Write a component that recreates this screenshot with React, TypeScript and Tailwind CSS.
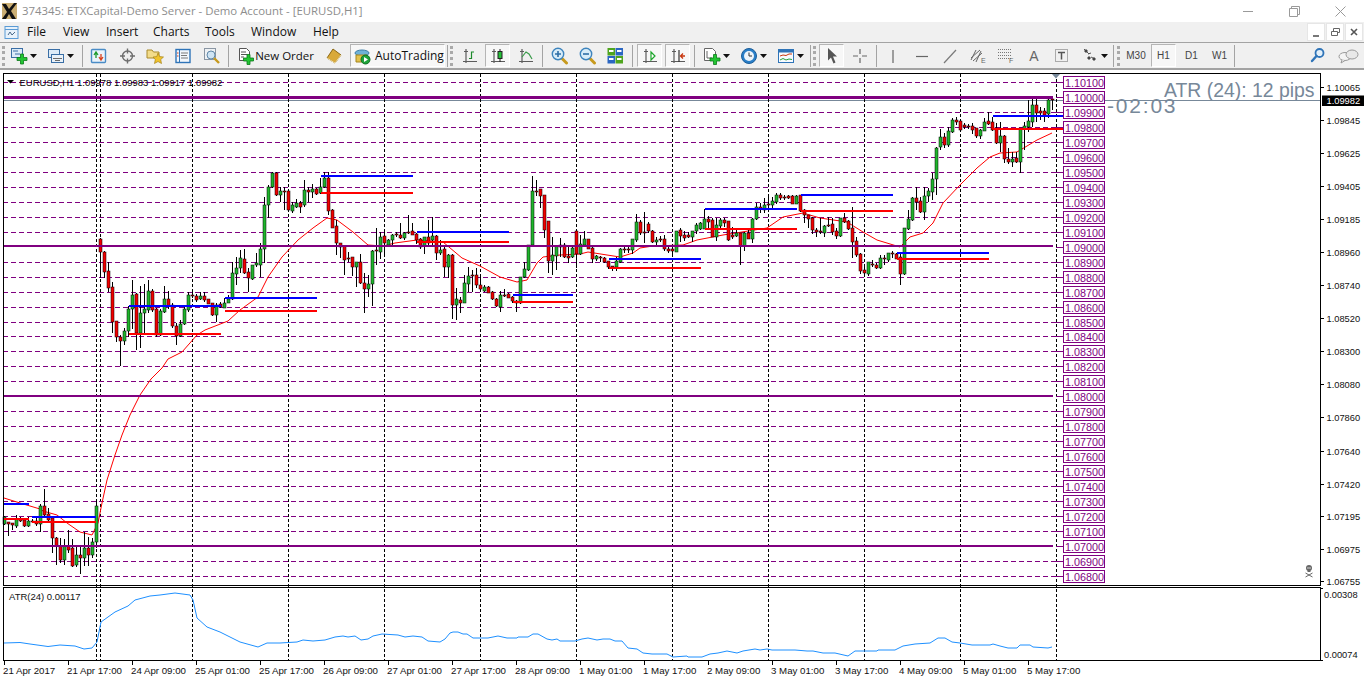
import React from "react";

type Bar = [number, number, number, number, number]; // body top, body bottom, high, low, 1 = green

// read off the chart in 3x crops, so values are (y - base) * 3
const fromCrop = (base: number, rows: Bar[]): Bar[] =>
  rows.map(([t, b, h, l, c]) => [
    Math.round(base + t / 3),
    Math.round(base + b / 3),
    Math.round(base + h / 3),
    Math.round(base + l / 3),
    c,
  ]);

const bars: Bar[] = [
  ...fromCrop(480, [
    [112, 132, 108, 135, 1], [127, 132, 127, 168, 0], [130, 135, 128, 150, 0], [118, 137, 105, 145, 1],
    [118, 122, 110, 125, 0], [120, 137, 118, 140, 0], [122, 137, 110, 140, 1], [122, 125, 118, 130, 0],
    [122, 133, 112, 137, 0], [78, 133, 72, 155, 1], [78, 105, 28, 115, 0], [103, 119, 85, 125, 0],
    [115, 175, 112, 218, 0], [175, 197, 170, 255, 0], [197, 240, 175, 250, 0], [197, 240, 178, 255, 1],
    [197, 209, 150, 218, 0], [205, 258, 178, 262, 0], [225, 255, 195, 260, 1], [225, 233, 195, 282, 0],
    [205, 235, 155, 258, 1], [205, 225, 172, 258, 0], [187, 225, 175, 235, 1], [78, 187, 60, 205, 1],
  ]),
  ...fromCrop(160, [
    [238, 275, 235, 355, 0], [275, 335, 272, 355, 0], [333, 383, 305, 395, 0], [381, 485, 365, 520, 0],
    [484, 530, 484, 545, 0], [530, 542, 525, 618, 0], [514, 542, 505, 555, 1], [448, 514, 438, 530, 1],
    [405, 448, 360, 508, 1], [402, 518, 398, 570, 0], [460, 518, 378, 565, 1], [447, 460, 372, 520, 1],
    [394, 450, 360, 460, 1], [394, 450, 388, 455, 0], [448, 525, 445, 530, 0], [453, 524, 448, 528, 1],
    [418, 455, 378, 460, 1], [418, 438, 392, 448, 0], [436, 497, 430, 505, 0], [499, 527, 490, 555, 0],
    [493, 527, 480, 530, 1], [447, 493, 440, 495, 1], [405, 450, 395, 455, 1], [405, 408, 392, 415, 0],
    [408, 420, 402, 425, 0], [408, 416, 396, 420, 1], [408, 420, 395, 425, 0], [418, 431, 416, 433, 0],
    [430, 465, 428, 468, 0], [434, 464, 430, 485, 1], [432, 442, 425, 445, 0], [428, 443, 415, 445, 1],
    [417, 428, 405, 430, 1], [340, 417, 305, 420, 1], [325, 341, 292, 375, 1], [295, 325, 270, 340, 1],
    [296, 338, 268, 342, 0], [336, 355, 325, 395, 0], [316, 356, 316, 360, 1], [310, 316, 280, 320, 1],
    [268, 314, 248, 352, 1], [136, 268, 112, 310, 1], [80, 136, 75, 175, 1], [39, 80, 35, 85, 1],
    [39, 104, 36, 108, 0], [94, 104, 80, 125, 1], [92, 94, 80, 150, 0], [94, 150, 92, 155, 0],
    [136, 152, 125, 160, 1], [130, 140, 118, 145, 1], [128, 140, 122, 158, 0], [91, 136, 60, 140, 1],
    [91, 95, 82, 125, 0], [88, 95, 72, 115, 1], [88, 102, 85, 104, 0], [82, 100, 55, 102, 1],
    [54, 82, 35, 85, 1], [55, 152, 35, 165, 0], [150, 203, 148, 205, 0], [199, 250, 180, 285, 0],
    [250, 260, 250, 295, 0], [259, 299, 258, 345, 0], [293, 296, 275, 305, 0], [292, 320, 292, 348, 0],
    [306, 320, 305, 382, 1], [306, 368, 282, 372, 0], [370, 386, 340, 460, 0], [372, 386, 345, 412, 1],
    [273, 371, 270, 438, 1], [270, 273, 205, 315, 0], [232, 276, 215, 298, 1], [229, 248, 215, 285, 0],
    [240, 254, 236, 258, 1], [224, 240, 222, 258, 1], [222, 226, 215, 232, 0], [226, 234, 190, 238, 0],
    [219, 234, 215, 240, 1], [217, 220, 165, 222, 0], [214, 224, 188, 226, 0], [222, 240, 220, 252, 0],
    [238, 262, 235, 266, 0], [232, 259, 230, 282, 1], [232, 248, 180, 255, 0], [229, 240, 172, 258, 1],
    [229, 278, 225, 300, 0], [270, 278, 240, 285, 1], [268, 322, 255, 352, 0], [284, 322, 282, 355, 1],
    [284, 434, 282, 478, 0], [418, 434, 385, 480, 1], [420, 428, 412, 460, 0], [370, 428, 345, 430, 1],
    [347, 372, 320, 395, 1], [346, 348, 330, 395, 0], [346, 376, 325, 385, 0], [376, 386, 350, 395, 0],
    [380, 394, 375, 396, 1], [380, 398, 378, 400, 0], [396, 418, 394, 420, 0], [418, 439, 415, 440, 0],
    [406, 440, 392, 455, 1], [404, 407, 388, 410, 0], [403, 413, 400, 415, 0], [412, 424, 408, 428, 0],
    [422, 430, 420, 455, 0], [352, 430, 352, 432, 1], [328, 352, 305, 355, 1], [254, 330, 254, 332, 1],
    [94, 254, 48, 255, 1], [92, 97, 60, 108, 0], [88, 107, 86, 145, 0], [106, 209, 106, 235, 0],
    [184, 304, 184, 338, 0], [286, 304, 232, 345, 1], [258, 288, 258, 330, 1], [256, 260, 235, 290, 0],
    [254, 290, 250, 295, 0], [287, 294, 262, 308, 0], [265, 292, 262, 295, 1], [214, 283, 214, 323, 0],
    [252, 282, 225, 285, 1], [238, 254, 212, 262, 1], [238, 266, 236, 268, 0], [265, 298, 262, 310, 0],
    [289, 297, 284, 302, 1], [291, 295, 288, 305, 0], [294, 306, 292, 308, 0], [304, 320, 302, 328, 0],
    [318, 322, 318, 332, 0], [304, 320, 290, 332, 1], [268, 306, 265, 308, 1], [266, 268, 260, 278, 0],
    [266, 270, 258, 280, 0], [238, 269, 236, 282, 1], [187, 240, 162, 245, 1], [185, 220, 180, 225, 0],
    [215, 218, 155, 250, 0], [193, 212, 185, 220, 0], [212, 245, 210, 250, 0], [240, 247, 230, 258, 1],
    [238, 241, 228, 245, 0], [238, 268, 226, 272, 0], [266, 272, 255, 280, 0], [268, 274, 258, 285, 0],
    [213, 275, 213, 276, 1], [210, 228, 205, 245, 0], [225, 233, 212, 243, 0], [226, 230, 215, 235, 0],
    [214, 230, 212, 245, 1], [195, 214, 190, 222, 1], [190, 207, 185, 210, 1], [177, 207, 147, 208, 1],
    [177, 185, 168, 205, 0], [181, 230, 175, 232, 0], [196, 230, 175, 242, 1], [180, 197, 175, 205, 1],
    [180, 188, 175, 200, 0], [183, 240, 182, 242, 0], [224, 232, 200, 238, 0], [220, 228, 208, 232, 1],
    [220, 257, 218, 314, 0], [218, 258, 215, 272, 1], [218, 236, 205, 238, 0], [177, 236, 175, 248, 1],
    [142, 177, 128, 180, 1], [140, 148, 128, 160, 0], [136, 150, 115, 158, 1], [132, 136, 112, 156, 0],
    [124, 134, 112, 146, 1], [105, 127, 100, 132, 1], [105, 115, 98, 120, 0], [111, 115, 106, 120, 0],
    [108, 113, 104, 118, 0], [108, 131, 106, 133, 0], [108, 131, 106, 132, 1], [106, 152, 105, 155, 0],
    [150, 165, 148, 190, 0], [166, 178, 164, 205, 0], [175, 209, 172, 222, 0], [209, 217, 205, 232, 0],
    [213, 216, 175, 222, 0], [198, 218, 196, 232, 1], [195, 198, 170, 200, 0], [193, 216, 175, 225, 0],
    [213, 228, 205, 238, 0], [175, 228, 173, 232, 1], [175, 187, 160, 190, 0], [184, 207, 180, 210, 0],
    [204, 245, 140, 295, 0], [243, 285, 232, 290, 0], [283, 332, 280, 342, 0], [330, 340, 320, 345, 0],
    [305, 343, 305, 348, 1], [312, 316, 300, 320, 0], [315, 324, 310, 328, 0], [295, 324, 285, 326, 1],
    [294, 298, 285, 315, 0], [280, 300, 278, 305, 1], [278, 281, 274, 295, 0], [283, 296, 278, 298, 0],
    [292, 342, 280, 375, 0], [205, 342, 205, 345, 1], [178, 206, 150, 210, 1], [115, 180, 110, 182, 1],
    [115, 125, 80, 150, 0], [122, 156, 110, 158, 0], [107, 155, 82, 180, 1], [92, 107, 85, 125, 1],
    [58, 95, 40, 120, 1],
  ]),
  ...fromCrop(90, [
    [175, 268, 172, 315, 1], [142, 172, 118, 180, 1], [142, 165, 130, 175, 0], [123, 166, 112, 170, 1],
    [90, 125, 85, 128, 1], [90, 95, 82, 105, 0], [94, 120, 92, 122, 0], [106, 110, 100, 118, 0],
    [108, 112, 103, 116, 0], [108, 120, 98, 132, 0], [115, 137, 113, 145, 0], [120, 137, 118, 147, 1],
    [96, 122, 85, 124, 1], [94, 102, 65, 105, 0], [97, 120, 80, 122, 0], [115, 158, 100, 162, 0],
    [138, 158, 96, 185, 1], [138, 208, 136, 218, 0], [206, 215, 175, 222, 0], [206, 215, 185, 232, 1],
    [203, 215, 185, 218, 0], [115, 215, 115, 250, 1], [108, 118, 95, 180, 1], [94, 110, 30, 125, 1],
    [45, 95, 28, 112, 1], [45, 68, 28, 95, 0], [64, 68, 50, 90, 0], [64, 74, 55, 95, 0],
    [30, 72, 28, 85, 1], [28, 30, 25, 60, 0],
  ]),
];

const maPoints =
  "4,498 20,503 40,509 43,511 57,515 67,523 80,532 92,535 98,523 102,503 107,480 115,455 122,435 130,415 140,395 151,379 162,368 168,359 182,352 197,335 205,330 228,321 240,310 258,297 268,277 282,257 298,240 313,228 327,218 337,220 353,232 368,245 383,246 395,243 417,240 443,242 462,258 480,266 500,277 517,282 527,280 537,263 543,257 560,255 580,254 588,252 607,255 620,257 633,253 640,248 653,246 683,245 697,240 723,235 767,228 783,217 803,213 820,218 847,222 863,232 877,240 900,247 910,237 923,233 933,223 943,203 960,185 977,168 990,157 1000,153 1017,152 1037,140 1052,133";

const atrPoints =
  "4,643 20,642.5 30,644 48,646.5 60,645 75,646 84,649 92,648 97,642 101,622 115,612 128,606 135,600 150,596 160,595 175,593 190,595 193,600 197,618 207,627 220,632 240,642 258,647 267,643 280,643 285,642.7 297,642 303,640 313,641 325,640 335,637 343,636 348,637 355,636 361,640 368,639 373,636 382,634 398,635 405,637 413,636 422,637 428,641 440,642 445,639 450,633 453,632 458,632 463,634 467,634 473,638 488,638 498,636 507,638 517,638 518,637 528,637 533,634 538,634 547,639 552,640 557,639 560,641 575,641 582,639 588,638 597,640 603,639 610,639 615,641 622,641 628,648 637,649 643,653 652,654 667,654 673,657 687,656 688,657 702,657 710,654 718,653 727,651 737,653 743,651 755,649 760,650 767,649 772,650 795,650 807,651 813,651 823,653 835,653 848,656 855,651 877,651 878,650 895,650 903,646 915,644 930,643 938,638 945,638 952,642 960,643 972,645 990,645 993,644 1000,646 1008,648 1017,648 1020,645 1030,645 1033,647 1048,648 1052,647";

// [x from, x to, y blue, y red]
const levels = [
  [3, 29, 504, 519],
  [32, 96, 517, 522],
  [129, 221, 306, 334],
  [225, 317, 298, 311],
  [321, 413, 176, 193],
  [417, 509, 232, 242],
  [513, 573, 295, 302],
  [609, 701, 259, 268],
  [705, 797, 209, 229],
  [801, 893, 195, 211],
  [897, 989, 253, 259],
  [993, 1063, 116, 129],
];

const roundLabels = [
  "1.10100", "1.10000", "1.09900", "1.09800", "1.09700", "1.09600", "1.09500", "1.09400", "1.09300",
  "1.09200", "1.09100", "1.09000", "1.08900", "1.08800", "1.08700", "1.08600", "1.08500", "1.08400",
  "1.08300", "1.08200", "1.08100", "1.08000", "1.07900", "1.07800", "1.07700", "1.07600", "1.07500",
  "1.07400", "1.07300", "1.07200", "1.07100", "1.07000", "1.06900", "1.06800",
];

const priceAxis: [string, number][] = [
  ["1.10065", 90.5], ["1.09845", 123.5], ["1.09625", 156.5], ["1.09405", 189.5], ["1.09185", 222.5],
  ["1.08960", 255.5], ["1.08740", 288.5], ["1.08520", 321.5], ["1.08300", 354.5], ["1.08080", 387.5],
  ["1.07860", 420.5], ["1.07640", 454.5], ["1.07420", 487.5], ["1.07195", 519.5], ["1.06975", 552.5],
  ["1.06755", 585],
];

const timeAxis = [
  "21 Apr 2017", "21 Apr 17:00", "24 Apr 09:00", "25 Apr 01:00", "25 Apr 17:00", "26 Apr 09:00",
  "27 Apr 01:00", "27 Apr 17:00", "28 Apr 09:00", "1 May 01:00", "1 May 17:00", "2 May 09:00",
  "3 May 01:00", "3 May 17:00", "4 May 09:00", "5 May 01:00", "5 May 17:00",
];

const vLines = [96.5, 100.5, 192.5, 288.5, 384.5, 480.5, 576.5, 672.5, 768.5, 864.5, 960.5, 1056.5];
const roundY = (k: number) => Math.round(82 + k * 14.97) + 0.5;

const Ic = ({ w = 17, children }: { w?: number; children: React.ReactNode }) => (
  <svg width={w} height={18} viewBox={`0 0 ${w} 18`} className="block shrink-0">
    {children}
  </svg>
);

const Plus = ({ x, y }: { x: number; y: number }) => (
  <path
    transform={`translate(${x} ${y})`}
    d="M3.5 0h3v3.5H10v3H6.500V10h-3V6.500H0v-3h3.500z"
    fill="#22c532"
    stroke="#0b7a1a"
    strokeWidth="0.8"
  />
);

const Caret = () => (
  <svg width={7} height={4} viewBox="0 0 7 4" className="block shrink-0">
    <path d="M0 0h7L3.500 4z" fill="#111" />
  </svg>
);

const Axes = () => (
  <path d="M4 2v14M1 14.500h14M2 4.500h4" stroke="#5c5c5c" strokeWidth="1.200" fill="none" />
);

const Grip = () => <div className="h-[20px] w-[3px] border-l-[3px] border-dotted border-[#a9a9a9]" />;
const Sep = () => <div className="h-[22px] w-px bg-[#a3a3a3]" />;

const Pressed = ({ className, children }: { className: string; children: React.ReactNode }) => (
  <div
    className={`flex h-[23px] items-center justify-center border border-t-[#b5b5b5] border-l-[#b5b5b5] border-r-white border-b-white bg-[#f7f7f7] ${className}`}
  >
    {children}
  </div>
);

const ZoomGlass = ({ minus }: { minus?: boolean }) => (
  <Ic w={18}>
    <path d="M10.500 11l5 5" stroke="#c79a1e" strokeWidth="3" strokeLinecap="round" />
    <circle cx="7" cy="7" r="5.700" fill="#d8ecf8" stroke="#3d84bd" strokeWidth="1.400" />
    <path d={minus ? "M4 7h6" : "M4 7h6M7 4v6"} stroke="#2f6fa6" strokeWidth="1.600" />
  </Ic>
);

const Toolbar = () => (
  <div className="flex h-[28px] items-center border-t border-b-2 border-t-[#a3a3a3] border-b-[#a3a3a3] bg-[#f0f0f0] font-['Open_Sans',sans-serif] text-[12px] text-[#111]">
    <div className="ml-[2px]"><Grip /></div>
    <div className="ml-[5px] flex w-[27px] items-center justify-between">
      <Ic w={18}>
        <rect x="1.500" y="1.500" width="11" height="9" fill="#dcebf8" stroke="#3a6ea5" />
        <path d="M3 4h5M5 7h5" stroke="#3a6ea5" />
        <Plus x={7} y={7} />
      </Ic>
      <Caret />
    </div>
    <div className="ml-[10px] flex w-[27px] items-center justify-between">
      <Ic w={18}>
        <rect x="1.500" y="2.500" width="11" height="8" fill="#dcebf8" stroke="#3a6ea5" />
        <rect x="4.500" y="7.500" width="12" height="8" fill="#e9f1f8" stroke="#3a6ea5" />
        <path d="M6 11.500h9M8 13.500h5" stroke="#6b6b6b" />
      </Ic>
      <Caret />
    </div>
    <div className="ml-[8px]"><Sep /></div>
    <div className="ml-[7px]">
      <Ic>
        <rect x="1.500" y="2.500" width="14" height="13" rx="1" fill="#eaf3fb" stroke="#4a8cc6" strokeWidth="1.400" />
        <path d="M6 11V6M4 8l2-3 2 3" stroke="#1d9a2c" strokeWidth="1.300" fill="none" />
        <path d="M11 7v5M9 10l2 3 2-3" stroke="#d8401c" strokeWidth="1.300" fill="none" />
      </Ic>
    </div>
    <div className="ml-[12px]">
      <Ic>
        <circle cx="8.500" cy="9" r="5" fill="none" stroke="#6e6e6e" strokeWidth="1.400" />
        <path d="M8.500 1.500v5M8.500 11.500v5M1 9h5M11 9h5" stroke="#6e6e6e" strokeWidth="1.400" />
      </Ic>
    </div>
    <div className="ml-[10px]">
      <Ic w={18}>
        <path d="M1 3h5l1.500 2H13v6H1z" fill="#f3dc8a" stroke="#a98a2c" />
        <path d="M12 6l1.700 3.600 3.800.4-2.800 2.600.8 3.900-3.500-2-3.500 2 .8-3.900L7 10l3.800-.4z" fill="#f0c32c" stroke="#a5821a" strokeWidth="0.700" />
      </Ic>
    </div>
    <div className="ml-[11px]">
      <Ic w={16}>
        <rect x="1" y="2.500" width="14" height="13" fill="#f2f7fc" stroke="#2f74b8" strokeWidth="1.400" />
        <path d="M4.500 3v12" stroke="#2f74b8" />
        <path d="M6 6h7M6 8.500h6M6 11h7" stroke="#7a7a7a" />
        <path d="M2 6h1.500M2 9h1.500" stroke="#d8401c" />
      </Ic>
    </div>
    <div className="ml-[12px]">
      <Ic>
        <rect x="1.500" y="1.500" width="11" height="11" fill="#eef1f4" stroke="#8a96a3" />
        <circle cx="8" cy="8" r="4" fill="#cfe4f4" stroke="#5f87a8" />
        <path d="M11 11l5 5" stroke="#c79a1e" strokeWidth="2.400" />
      </Ic>
    </div>
    <div className="ml-[8px]"><Sep /></div>
    <div className="ml-[9px] flex w-[76px] items-center justify-between">
      <Ic w={16}>
        <path d="M1.500 1.500h7l3 3v9h-10z" fill="#fff" stroke="#555" />
        <path d="M3 5h5M3 7.500h6M3 10h3" stroke="#555" />
        <Plus x={5.500} y={7.500} />
      </Ic>
      <span className="whitespace-nowrap text-[11.5px]">New Order</span>
    </div>
    <div className="ml-[12px]">
      <Ic w={16}>
        <path d="M7 2l8 6-6 8-8-5z" fill="#d9a93a" stroke="#8a6714" />
        <path d="M1 11l8 5 6-8" fill="none" stroke="#f4e2ae" />
      </Ic>
    </div>
    <Pressed className="ml-[8px] w-[95px] justify-start gap-[4px] pl-[3px]">
      <Ic w={17}>
        <ellipse cx="8" cy="6" rx="7" ry="3" fill="#6fb2d8" stroke="#3c7ea8" />
        <path d="M2 8h11v7H2z" fill="#e4c24e" stroke="#a4861f" />
        <circle cx="11.500" cy="12.500" r="4.500" fill="#1ea33a" stroke="#0e6f22" />
        <path d="M10 10l4 2.500-4 2.500z" fill="#fff" />
      </Ic>
      <span className="whitespace-nowrap">AutoTrading</span>
    </Pressed>
    <div className="ml-[2px]"><Sep /></div>
    <div className="ml-[2px]"><Grip /></div>
    <div className="ml-[9px]">
      <Ic w={16}>
        <Axes />
        <path d="M7 11.500h2.500V5H12" stroke="#1d8a2c" strokeWidth="1.200" fill="none" />
      </Ic>
    </div>
    <Pressed className="ml-[7px] w-[25px]">
      <Ic w={16}>
        <Axes />
        <path d="M10 2v13" stroke="#222" />
        <rect x="8" y="4.500" width="4" height="7" fill="#24c038" stroke="#222" />
      </Ic>
    </Pressed>
    <div className="ml-[8px]">
      <Ic w={16}>
        <Axes />
        <path d="M4 10l4-5 3 2 3 5" stroke="#3a9a4a" strokeWidth="1.200" fill="none" />
      </Ic>
    </div>
    <div className="ml-[8px]"><Sep /></div>
    <div className="ml-[8px]"><ZoomGlass /></div>
    <div className="ml-[10px]"><ZoomGlass minus /></div>
    <div className="ml-[10px]">
      <Ic w={16}>
        <rect x="0.500" y="1" width="7.500" height="7.500" fill="#4fa51e" />
        <rect x="8.500" y="1" width="7.500" height="7.500" fill="#2a66c2" />
        <rect x="0.500" y="9" width="7.500" height="7.500" fill="#2a66c2" />
        <rect x="8.500" y="9" width="7.500" height="7.500" fill="#4fa51e" />
        <path d="M2 4h4.500M10 4h4.500M2 12h4.500M10 12h4.500" stroke="#fff" strokeWidth="2" />
      </Ic>
    </div>
    <div className="ml-[9px]"><Sep /></div>
    <Pressed className="ml-[4px] w-[25px]">
      <Ic w={16}>
        <Axes />
        <path d="M9 5l4 4-4 4z" fill="#fff" stroke="#1da52c" strokeWidth="1.200" />
      </Ic>
    </Pressed>
    <Pressed className="ml-[3px] w-[25px]">
      <Ic w={16}>
        <Axes />
        <path d="M9 3v12" stroke="#333" strokeWidth="1.200" />
        <path d="M15 9h-4M13 6.500L10.500 9l2.500 2.500" stroke="#c8370f" strokeWidth="1.300" fill="none" />
      </Ic>
    </Pressed>
    <div className="ml-[4px]"><Sep /></div>
    <div className="ml-[8px] flex w-[27px] items-center justify-between">
      <Ic w={18}>
        <path d="M1.500 1.500h8l3 3v9h-11z" fill="#fff" stroke="#666" />
        <path d="M4 4v7h5" stroke="#666" fill="none" />
        <Plus x={7} y={7.500} />
      </Ic>
      <Caret />
    </div>
    <div className="ml-[10px] flex w-[27px] items-center justify-between">
      <Ic w={18}>
        <circle cx="9" cy="9" r="7.500" fill="#2a7fc8" stroke="#1c5e99" />
        <circle cx="9" cy="9" r="5" fill="#eef5fb" />
        <path d="M9 5.500V9h3" stroke="#333" fill="none" />
      </Ic>
      <Caret />
    </div>
    <div className="ml-[10px] flex w-[27px] items-center justify-between">
      <Ic w={18}>
        <rect x="1.500" y="2.500" width="15" height="13" fill="#f7fbff" stroke="#2f74b8" />
        <rect x="1.500" y="2.500" width="15" height="3" fill="#2f74b8" />
        <path d="M3 9l3-1 3 .5 3-1.500h3" stroke="#c8370f" fill="none" />
        <path d="M3 13l3-1.500 3 1.500 3-1 3 .5" stroke="#27a03a" fill="none" />
      </Ic>
      <Caret />
    </div>
    <div className="ml-[6px]"><Sep /></div>
    <div className="ml-[2px]"><Grip /></div>
    <Pressed className="ml-[3px] w-[25px]">
      <Ic w={12}>
        <path d="M2 1l9 8.500H7l2.500 6-2 1-2.500-6L2 13.500z" fill="#555" />
      </Ic>
    </Pressed>
    <div className="ml-[7px]">
      <Ic w={18}>
        <path d="M9 2v5M9 11v5M2 9h5M11 9h5" stroke="#666" strokeWidth="1.200" />
      </Ic>
    </div>
    <div className="ml-[7px]"><Sep /></div>
    <div className="ml-[11px]">
      <Ic w={10}><path d="M5 3v13" stroke="#666" strokeWidth="1.200" /></Ic>
    </div>
    <div className="ml-[18px]">
      <Ic w={12}><path d="M0 9.500h12" stroke="#666" strokeWidth="1.200" /></Ic>
    </div>
    <div className="ml-[15px]">
      <Ic w={14}><path d="M1 16L13 3" stroke="#7a7a7a" strokeWidth="1.200" /></Ic>
    </div>
    <div className="ml-[13px]">
      <Ic w={16}>
        <path d="M1 11l9-8M3 14l9-8M1 13l5-10M6 15l5-11" stroke="#666" />
        <text x="11" y="16" fontSize="7" fill="#666" fontFamily="Liberation Sans">E</text>
      </Ic>
    </div>
    <div className="ml-[12px]">
      <Ic w={16}>
        <path d="M0 2.500h14M0 5.500h14M0 8.500h14M0 11.500h14" stroke="#777" strokeDasharray="1 1" />
        <text x="11" y="16" fontSize="7" fill="#666" fontFamily="Liberation Sans">F</text>
      </Ic>
    </div>
    <div className="ml-[14px] w-[12px] text-center font-['Liberation_Sans',sans-serif] text-[14px] leading-none text-[#666]">A</div>
    <div className="ml-[14px]">
      <Ic w={15}>
        <rect x="1.500" y="2.500" width="12" height="12" fill="none" stroke="#666" strokeDasharray="1 1" />
        <path d="M4 5.500h7M7.500 5.500v7" stroke="#555" strokeWidth="1.500" />
      </Ic>
    </div>
    <div className="ml-[13px] flex w-[26px] items-center justify-between">
      <Ic w={16}>
        <path d="M2 2l5 5M6 7l3-1M9 10l4 2" stroke="#555" />
        <path d="M4 2l2 2-2 2-2-2zM7 9l2 2-2 2-2-2zM12 10l2 2-2 2-2-2z" fill="#444" />
      </Ic>
      <Caret />
    </div>
    <div className="ml-[5px]"><Sep /></div>
    <div className="ml-[3px]"><Grip /></div>
    <div className="ml-[5px] flex h-[23px] w-[22px] items-center justify-center font-['Liberation_Sans',sans-serif] text-[10px] text-[#444]">M30</div>
    <Pressed className="ml-[4px] w-[25px] font-['Liberation_Sans',sans-serif] text-[10px] text-[#444]">H1</Pressed>
    <div className="ml-[3px] flex h-[23px] w-[25px] items-center justify-center font-['Liberation_Sans',sans-serif] text-[10px] text-[#444]">D1</div>
    <div className="ml-[3px] flex h-[23px] w-[25px] items-center justify-center font-['Liberation_Sans',sans-serif] text-[10px] text-[#444]">W1</div>
    <div className="ml-[2px]"><Sep /></div>
    <div className="ml-auto">
      <Ic w={15}>
        <circle cx="9.500" cy="6" r="4" fill="#e3f0fa" stroke="#2f74b8" strokeWidth="1.800" />
        <path d="M6.500 9L2 14" stroke="#2f74b8" strokeWidth="2.400" strokeLinecap="round" />
      </Ic>
    </div>
    <div className="ml-[13px] mr-[5px]">
      <Ic w={21}>
        <ellipse cx="7" cy="9.500" rx="6" ry="4" fill="#f4f4f4" stroke="#9a9a9a" />
        <ellipse cx="14" cy="7.500" rx="6" ry="4.500" fill="#e8e8e8" stroke="#9a9a9a" />
        <path d="M4 13l-1 3 4-2.500" fill="#f4f4f4" stroke="#9a9a9a" />
      </Ic>
    </div>
  </div>
);

const Chart = () => (
  <svg width={1364} height={611} viewBox="0 70 1364 611" className="block font-['Liberation_Sans',sans-serif]">
    <rect x="0" y="70" width="1364" height="611" fill="#fff" />

    {/* bid line */}
    <path d="M3 100.500H1320" stroke="#778899" />

    {/* vertical period separators */}
    {vLines.map((x) => (
      <path key={x} d={`M${x} 74V661`} stroke="#000" strokeDasharray="3 2" />
    ))}

    {/* round number levels, the whole figures are drawn solid further down */}
    {roundLabels.map((_, k) => (
      <g key={k} stroke="#800080">
        {k % 10 !== 1 && <path d={`M3 ${roundY(k)}H1056`} strokeDasharray="5 3" />}
        <path d={`M1056 ${roundY(k)}H1064`} />
      </g>
    ))}

    {/* moving average */}
    <polyline points={maPoints} fill="none" stroke="#ff0000" />

    {/* candles */}
    {bars.map(([t, b, h, l, c], i) => {
      const x = 4 + i * 4;
      return (
        <g key={i}>
          <path d={`M${x + 0.5} ${h}V${l}`} stroke="#000" />
          <rect
            x={x - 1}
            y={t}
            width={3}
            height={Math.max(b - t, 1)}
            fill={c ? "#1fb52c" : "#f00000"}
            stroke="#000"
            strokeWidth={0.5}
          />
        </g>
      );
    })}

    {/* whole figure levels */}
    <path d="M3 97.500H1053" stroke="#800080" strokeWidth="3" />
    {[246, 396, 546].map((y) => (
      <path key={y} d={`M3 ${y}H1053`} stroke="#800080" strokeWidth="2" />
    ))}

    {/* daily levels */}
    {levels.map(([x1, x2, blue, red]) => (
      <g key={x1} strokeWidth="2">
        <path d={`M${x1} ${blue}H${x2}`} stroke="#0000ff" />
        <path d={`M${x1} ${red}H${x2}`} stroke="#ff0000" />
      </g>
    ))}

    {/* round number labels */}
    {roundLabels.map((label, k) => (
      <g key={label}>
        <rect x="1063.500" y={Math.round(76 + k * 14.97) + 0.5} width="41" height="12" fill="#fff" stroke="#800080" />
        <text x="1065" y={Math.round(86 + k * 14.97) + 0.5} fontSize="10.800" fill="#800080">
          {label}
        </text>
      </g>
    ))}

    <polygon points="1052,74 1060,74 1056,78.500" fill="#778899" />

    {/* main pane header */}
    <polygon points="7,80 14,80 10.500,83.500" fill="#000" />
    <text x="19.500" y="85.500" fontSize="9.500" fill="#000">
      EURUSD,H1 1.09978 1.09983 1.09917 1.09982
    </text>

    <text x="1164" y="97" fontSize="19.400" fill="#778899">
      ATR (24): 12 pips
    </text>
    <text x="1107" y="113" fontSize="21" letterSpacing="1.800" fill="#778899">
      -02:03
    </text>

    {/* skull */}
    <g fill="#666" stroke="#666">
      <circle cx="1309" cy="568" r="3" stroke="none" />
      <rect x="1307.500" y="570" width="3" height="2" stroke="none" />
      <circle cx="1308" cy="568" r="0.700" fill="#fff" stroke="none" />
      <circle cx="1310" cy="568" r="0.700" fill="#fff" stroke="none" />
      <path d="M1305.500 573l7 4M1312.500 573l-7 4" fill="none" />
    </g>

    {/* frames */}
    <rect x="3.500" y="73.500" width="1317" height="512" fill="none" stroke="#000" />
    <rect x="3.500" y="587.500" width="1317" height="73" fill="none" stroke="#000" />

    {/* price axis */}
    {priceAxis.map(([label, y]) => (
      <g key={label}>
        <path d={`M1321 ${Math.floor(y - 3.5) + 0.5}H1324`} stroke="#000" />
        <text x="1326.500" y={y} fontSize="9.300" fill="#111">
          {label}
        </text>
      </g>
    ))}
    <rect x="1322" y="95.500" width="42" height="10.500" fill="#000" />
    <text x="1326.500" y="104" fontSize="9.300" fill="#fff">
      1.09982
    </text>

    {/* ATR pane */}
    <polyline points={atrPoints} fill="none" stroke="#1e90ff" />
    <text x="9" y="599.500" fontSize="9.500" fill="#111">
      ATR(24) 0.00117
    </text>
    <path d="M1321 588.500H1323M1321 660.500H1323" stroke="#000" />
    <text x="1324" y="598" fontSize="9.300" fill="#111">0.00308</text>
    <text x="1324" y="657.500" fontSize="9.300" fill="#111">0.00074</text>

    {/* time axis */}
    {timeAxis.map((label, i) => (
      <g key={label}>
        <path d={`M${4.5 + i * 64} 661V665`} stroke="#000" />
        <text x={3 + i * 64} y="674" fontSize="9.700" fill="#111">
          {label}
        </text>
      </g>
    ))}
  </svg>
);

export default function App() {
  return (
    <div className="flex h-[681px] w-[1364px] flex-col overflow-hidden bg-white">
      {/* title bar */}
      <div className="flex h-[22px] items-center bg-white">
        <svg width={15} height={16} viewBox="0 0 15 16" className="ml-[2px] block shrink-0">
          <rect width="15" height="16" fill="#cbae73" />
          <path d="M0 1h4l3 5 5-6h3L9 8l5 8h-4L7 11l-3 5H0l5-7z" fill="#111" />
        </svg>
        <span className="ml-[5px] whitespace-nowrap font-['Open_Sans',sans-serif] text-[11.4px] text-[#8d8d8d]">
          374345: ETXCapital-Demo Server - Demo Account - [EURUSD,H1]
        </span>
        <div className="ml-auto flex pr-[1px]">
          <div className="flex h-[20px] w-[46px] items-center justify-center">
            <div className="h-px w-[10px] bg-[#9a9a9a]" />
          </div>
          <div className="flex h-[20px] w-[46px] items-center justify-center">
            <svg width={11} height={11} viewBox="0 0 11 11">
              <path d="M.5 2.500h8v8h-8zM2.500 2.500V.5h8v8H8.500" fill="none" stroke="#9a9a9a" />
            </svg>
          </div>
          <div className="flex h-[20px] w-[46px] items-center justify-center">
            <svg width={11} height={11} viewBox="0 0 11 11">
              <path d="M.5.5l10 10M10.500.5l-10 10" stroke="#9a9a9a" />
            </svg>
          </div>
        </div>
      </div>

      {/* menu bar */}
      <div className="flex h-[20px] items-center bg-[#f0f0f0] font-['Open_Sans',sans-serif] text-[12px] text-[#111]">
        <svg width={15} height={15} viewBox="0 0 15 15" className="ml-[4px] block shrink-0">
          <rect x="1" y="1.500" width="13" height="12" fill="#e8f2fb" stroke="#5b9bd5" />
          <path d="M1 4.500h13" stroke="#5b9bd5" />
          <path d="M4 10l2-3 2 3 3-3" stroke="#4a6a8a" fill="none" />
        </svg>
        <div className="ml-[8px] flex">
          <span className="w-[36px]">File</span>
          <span className="w-[43px]">View</span>
          <span className="w-[47px]">Insert</span>
          <span className="w-[52px]">Charts</span>
          <span className="w-[46px]">Tools</span>
          <span className="w-[62px]">Window</span>
          <span>Help</span>
        </div>
        <div className="ml-auto flex gap-[1px] pr-[1px]">
          <div className="flex h-[18px] w-[18px] items-end justify-center border border-[#e6e6e6] bg-white pb-[3px]">
            <div className="h-[2px] w-[6px] bg-[#777]" />
          </div>
          <div className="flex h-[18px] w-[18px] items-center justify-center border border-[#e6e6e6] bg-white">
            <svg width={9} height={8} viewBox="0 0 9 8">
              <path d="M.5 3.500h6v4h-6zM2.500 3V.5h6v4H7" fill="none" stroke="#666" />
            </svg>
          </div>
          <div className="flex h-[18px] w-[18px] items-center justify-center border border-[#e6e6e6] bg-white">
            <svg width={8} height={8} viewBox="0 0 8 8">
              <path d="M1 1l6 6M7 1L1 7" stroke="#555" strokeWidth="1.600" />
            </svg>
          </div>
        </div>
      </div>

      <Toolbar />
      <Chart />
    </div>
  );
}
